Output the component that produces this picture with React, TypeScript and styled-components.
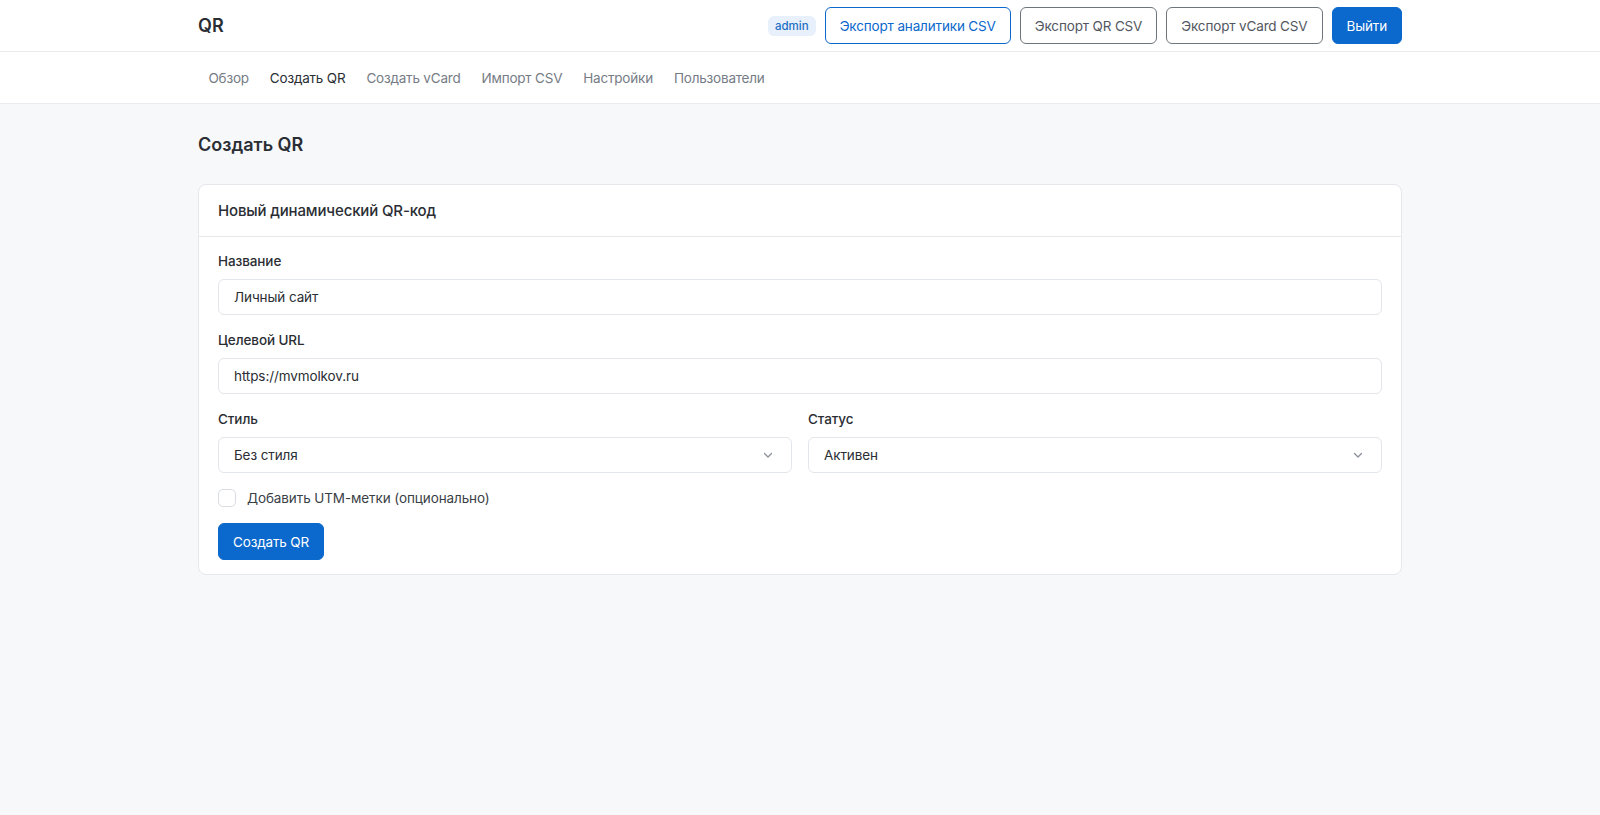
import styled, { createGlobalStyle } from "styled-components";

const GlobalStyle = createGlobalStyle`
  html, body {
    margin: 0;
    padding: 0;
    background: #f7f8fa;
    font-family: Inter, "Noto Sans", "Liberation Sans", sans-serif;
    color: #25292f;
    -webkit-font-smoothing: antialiased;
  }
  * {
    box-sizing: border-box;
  }
`;

const navItems = [
  "Обзор",
  "Создать QR",
  "Создать vCard",
  "Импорт CSV",
  "Настройки",
  "Пользователи",
];

const ChevronDown = () => (
  <svg width="12" height="12" viewBox="0 0 12 12" fill="none">
    <path
      d="M2.5 4.5L6 8L9.5 4.5"
      stroke="#8a9099"
      strokeWidth="1.3"
      strokeLinecap="round"
      strokeLinejoin="round"
    />
  </svg>
);

const App = () => {
  return (
    <Page>
      <GlobalStyle />
      <TopBar>
        <Container>
          <TopRow>
            <Brand>QR</Brand>
            <Actions>
              <Badge>admin</Badge>
              <Button variant="outlinePrimary">Экспорт аналитики CSV</Button>
              <Button variant="outline">Экспорт QR CSV</Button>
              <Button variant="outline">Экспорт vCard CSV</Button>
              <Button variant="primary">Выйти</Button>
            </Actions>
          </TopRow>
        </Container>
      </TopBar>

      <NavBar>
        <Container>
          <NavList>
            {navItems.map((item) => (
              <NavLink key={item} active={item === "Создать QR"}>
                {item}
              </NavLink>
            ))}
          </NavList>
        </Container>
      </NavBar>

      <Main>
        <Container>
          <PageTitle>Создать QR</PageTitle>
          <Card>
            <CardHeader>Новый динамический QR-код</CardHeader>
            <CardBody>
              <Field>
                <Label>Название</Label>
                <Input defaultValue="Личный сайт" />
              </Field>
              <Field>
                <Label>Целевой URL</Label>
                <Input defaultValue="https://mvmolkov.ru" />
              </Field>
              <TwoCols>
                <Field>
                  <Label>Стиль</Label>
                  <SelectBox>
                    <span>Без стиля</span>
                    <ChevronDown />
                  </SelectBox>
                </Field>
                <Field>
                  <Label>Статус</Label>
                  <SelectBox>
                    <span>Активен</span>
                    <ChevronDown />
                  </SelectBox>
                </Field>
              </TwoCols>
              <CheckRow>
                <CheckBox />
                <span>Добавить UTM-метки (опционально)</span>
              </CheckRow>
              <div>
                <Button variant="primary">Создать QR</Button>
              </div>
            </CardBody>
          </Card>
        </Container>
      </Main>
    </Page>
  );
};

export default App;

const Page = styled.div`
  min-height: 815px;
  background: #f7f8fa;
`;

const Container = styled.div`
  width: 1204px;
  margin: 0 auto;
`;

const TopBar = styled.header`
  background: #fff;
  border-bottom: 1px solid #e8eaed;
`;

const TopRow = styled.div`
  display: flex;
  align-items: center;
  justify-content: space-between;
  height: 51px;
`;

const Brand = styled.div`
  font-size: 18px;
  font-weight: 600;
  color: #2a2e34;
  letter-spacing: 0.2px;
`;

const Actions = styled.div`
  display: flex;
  align-items: center;
  gap: 9px;
`;

const Badge = styled.span`
  font-size: 11.5px;
  font-weight: 500;
  color: #1d6fc4;
  background: #e7f0fb;
  border-radius: 6px;
  padding: 3px 7px;
  line-height: 14px;
`;

type ButtonVariant = "primary" | "outline" | "outlinePrimary";

const buttonColors: Record<ButtonVariant, { bg: string; border: string; color: string }> = {
  primary: { bg: "#0b68cc", border: "#0b68cc", color: "#ffffff" },
  outline: { bg: "#ffffff", border: "#6f757d", color: "#52575f" },
  outlinePrimary: { bg: "#ffffff", border: "#0b68cc", color: "#0b68cc" },
};

const Button = styled.button<{ variant: ButtonVariant }>`
  height: 37px;
  padding: 0 14px;
  font-family: inherit;
  font-size: 13.5px;
  letter-spacing: -0.15px;
  font-weight: 400;
  border-radius: 6px;
  cursor: pointer;
  background: ${({ variant }) => buttonColors[variant].bg};
  border: 1px solid ${({ variant }) => buttonColors[variant].border};
  color: ${({ variant }) => buttonColors[variant].color};
`;

const NavBar = styled.nav`
  background: #fff;
  border-bottom: 1px solid #e8eaed;
`;

const NavList = styled.div`
  display: flex;
  align-items: center;
  height: 51px;
`;

const NavLink = styled.a<{ active?: boolean }>`
  padding: 0 10.5px;
  font-size: 13.5px;
  letter-spacing: -0.2px;
  color: ${({ active }) => (active ? "#2a2e34" : "#767c85")};
  font-weight: 400;
  cursor: pointer;
`;

const Main = styled.main`
  padding-top: 30px;
`;

const PageTitle = styled.h1`
  margin: 0 0 28px;
  font-size: 18px;
  line-height: 22px;
  font-weight: 600;
  color: #2a2e34;
`;

const Card = styled.section`
  background: #fff;
  border: 1px solid #e6e8eb;
  border-radius: 8px;
`;

const CardHeader = styled.div`
  height: 52px;
  display: flex;
  align-items: center;
  padding: 0 19px;
  border-bottom: 1px solid #e6e8eb;
  font-size: 15px;
  letter-spacing: -0.15px;
  font-weight: 500;
  color: #2a2e34;
`;

const CardBody = styled.div`
  display: flex;
  flex-direction: column;
  gap: 15px;
  padding: 14px 19px 14px;
`;

const Field = styled.div`
  display: flex;
  flex-direction: column;
  gap: 8px;
  min-width: 0;
`;

const Label = styled.label`
  font-size: 13.5px;
  letter-spacing: -0.1px;
  line-height: 20px;
  font-weight: 500;
  color: #2a2e34;
`;

const Input = styled.input`
  height: 36px;
  width: 100%;
  padding: 0 15px;
  border: 1px solid #e3e6ea;
  border-radius: 6px;
  font-family: inherit;
  font-size: 13.5px;
  letter-spacing: -0.1px;
  color: #2a2e34;
  background: #fff;
  outline: none;
`;

const TwoCols = styled.div`
  display: grid;
  grid-template-columns: 1fr 1fr;
  gap: 16px;
`;

const SelectBox = styled.div`
  height: 36px;
  display: flex;
  align-items: center;
  justify-content: space-between;
  padding: 0 17px 0 15px;
  border: 1px solid #e3e6ea;
  border-radius: 6px;
  font-size: 13.5px;
  letter-spacing: -0.1px;
  color: #2a2e34;
  background: #fff;
`;

const CheckRow = styled.label`
  display: flex;
  align-items: center;
  gap: 11px;
  height: 20px;
  font-size: 13.5px;
  letter-spacing: -0.1px;
  color: #3a3f46;
`;

const CheckBox = styled.span`
  width: 18px;
  height: 18px;
  border: 1px solid #d9dde2;
  border-radius: 5px;
  background: #fff;
  flex-shrink: 0;
`;
